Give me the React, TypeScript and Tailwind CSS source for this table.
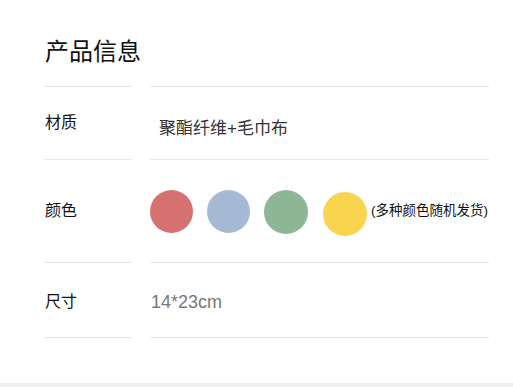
const swatches = [
  { color: 'bg-[#d5716f]', extra: '' },
  { color: 'bg-[#a4b9d3]', extra: '' },
  { color: 'bg-[#8db695]', extra: 'w-[44px] h-[44px]' },
  { color: 'bg-[#f9d54f]', extra: 'w-[44px] h-[44px] mt-[4px] ml-[1px]' },
];

const cjk = "font-['Liberation_Sans','Noto_Sans_CJK_SC',sans-serif]";

export default function App() {
  return (
    <div className={`w-[513px] h-[387px] bg-white flex flex-col ${cjk}`}>
      <div className="pl-[45px] pt-[40px] h-[86px]">
        <h2 className="text-[24px] leading-[24px] font-normal text-[#111] whitespace-nowrap">产品信息</h2>
      </div>
      <div className="flex gap-[18px] pl-[44px]">
        <div className="w-[88px] border-b border-[#e6e6e6]" />
        <div className="w-[339px] border-b border-[#e6e6e6]" />
      </div>

      {/* 材质 */}
      <div className="flex gap-[18px] pl-[44px]">
        <div className="w-[88px] h-[73px] border-b border-[#e6e6e6] flex items-center pl-[1px] text-[16px] text-[#111]">
          材质
        </div>
        <div className="w-[339px] h-[73px] border-b border-[#e6e6e6] flex items-center pt-[12px] pl-[9px] text-[17px] text-[#333]">
          聚酯纤维+毛巾布
        </div>
      </div>

      {/* 颜色 */}
      <div className="flex gap-[18px] pl-[44px]">
        <div className="w-[88px] h-[103px] border-b border-[#e6e6e6] flex items-center pl-[1px] text-[16px] text-[#111]">
          颜色
        </div>
        <div className="w-[339px] h-[103px] border-b border-[#e6e6e6] flex items-center">
          <div className="flex items-center gap-[14px] pt-[1px]">
            {swatches.map((s, i) => (
              <span key={i} className={`block rounded-full w-[43px] h-[43px] ${s.color} ${s.extra}`} />
            ))}
          </div>
          <span className="ml-[4px] text-[13.5px] text-[#111] whitespace-nowrap">(多种颜色随机发货)</span>
        </div>
      </div>

      {/* 尺寸 */}
      <div className="flex gap-[18px] pl-[44px]">
        <div className="w-[88px] h-[75px] border-b border-[#e6e6e6] flex items-center pt-[4px] pl-[1px] text-[16px] text-[#111]">
          尺寸
        </div>
        <div className="w-[339px] h-[75px] border-b border-[#e6e6e6] flex items-center pt-[4px] pl-[1px] text-[18px] text-[#777]">
          14*23cm
        </div>
      </div>

      <div className="flex-1" />
      <div className="h-[4px] bg-[#f0f0f0]" />
    </div>
  );
}
